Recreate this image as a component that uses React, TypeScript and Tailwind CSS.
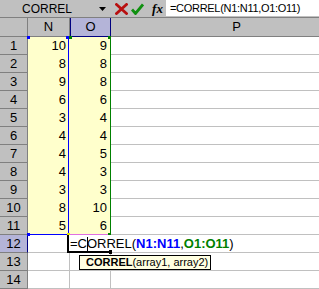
import React from "react";

const nVals = [10, 8, 9, 6, 3, 4, 4, 4, 3, 8, 5];
const oVals = [9, 8, 8, 6, 4, 4, 5, 3, 3, 10, 6];
const rows = Array.from({ length: 14 }, (_, i) => i + 1);

const App = () => {
  return (
    <div className="relative w-[319px] h-[289px] overflow-hidden bg-white text-black font-['Liberation_Sans',Arial,sans-serif]">
      {/* formula bar */}
      <div className="flex h-[18px] bg-[#c0c0c0] border-b border-[#808080]">
        <div className="w-[94px] shrink-0 flex items-center justify-center text-[12px] leading-none pt-px">CORREL</div>
        <div className="w-[16px] shrink-0 flex items-center justify-center pt-px">
          <svg width="7" height="4" viewBox="0 0 7 4">
            <path d="M0 0h7L3.5 4z" fill="#000" />
          </svg>
        </div>
        <div className="ml-[5px] w-[13px] shrink-0 flex items-center justify-center">
          <svg width="13" height="12" viewBox="0 0 13 12">
            <path d="M1.5 1.5l10 9M11.5 1.5l-10 9" stroke="#b81010" strokeWidth="2.8" strokeLinecap="square" />
          </svg>
        </div>
        <div className="ml-[3px] w-[13px] shrink-0 flex items-center justify-center">
          <svg width="13" height="12" viewBox="0 0 13 12">
            <path d="M1 6.5l3.5 4L12 1.5" stroke="#109010" strokeWidth="2.8" fill="none" />
          </svg>
        </div>
        <div className="ml-[8px] w-[11px] shrink-0 flex items-center justify-center font-['Liberation_Serif',serif] italic font-bold text-[13px] leading-none">
          fx
        </div>
        <div className="ml-[3px] flex-1 h-[16px] bg-white flex items-center pl-[4px] text-[11px] tracking-[-0.3px] whitespace-nowrap">
          =CORREL(N1:N11,O1:O11)
        </div>
      </div>

      {/* column headers */}
      <div className="flex h-[19px] text-[13px]">
        <div className="w-[28px] shrink-0 bg-[#c0c0c0] border-r border-b border-[#808080]" />
        <div className="w-[42px] shrink-0 bg-[#c0c0c0] border-r border-b border-[#808080] flex items-center justify-center">N</div>
        <div className="w-[41px] shrink-0 bg-[#b4b4d8] border-x border-b border-[#000080] flex items-center justify-center">O</div>
        <div className="w-[252px] shrink-0 bg-[#c0c0c0] border-r border-b border-[#808080] flex items-center justify-center">P</div>
      </div>

      {/* rows */}
      {rows.map((r) => {
        const filled = r <= 11;
        return (
          <div key={r} className="flex h-[18px] text-[13px]">
            <div
              className={
                r === 12
                  ? "w-[28px] shrink-0 bg-[#b4b4d8] border-r border-b border-r-[#000080] border-b-[#808080] flex items-center justify-center"
                  : "w-[28px] shrink-0 bg-[#c0c0c0] border-r border-b border-[#808080] flex items-center justify-center"
              }
            >
              {r}
            </div>
            <div
              className={
                filled
                  ? "w-[42px] shrink-0 bg-[#ffffcc] flex items-center justify-end pr-[4px]"
                  : "w-[42px] shrink-0 border-r border-b border-[#c0c0c0]"
              }
            >
              {filled ? nVals[r - 1] : null}
            </div>
            <div
              className={
                filled
                  ? "w-[41px] shrink-0 bg-[#ffffcc] flex items-center justify-end pr-[4px]"
                  : "w-[41px] shrink-0 border-r border-b border-[#c0c0c0]"
              }
            >
              {filled ? oVals[r - 1] : null}
            </div>
            <div className="w-[252px] shrink-0 border-r border-b border-[#c0c0c0]" />
          </div>
        );
      })}

      {/* range finder borders */}
      <div className="absolute left-[68px] top-[37px] w-px h-[198px] bg-[#0000ff]" />
      <div className="absolute left-[27px] top-[234px] w-[42px] h-px bg-[#0000ff]" />
      <div className="absolute left-[110px] top-[37px] w-px h-[198px] bg-[#008000]" />
      <div className="absolute left-[69px] top-[234px] w-[42px] h-px bg-[#e070e0]" />
      <div className="absolute left-[27px] top-[36px] w-[3px] h-[3px] bg-[#0000ff]" />
      <div className="absolute left-[66px] top-[36px] w-[3px] h-[3px] bg-[#0000ff]" />
      <div className="absolute left-[27px] top-[233px] w-[3px] h-[3px] bg-[#0000ff]" />
      <div className="absolute left-[69px] top-[36px] w-[3px] h-[3px] bg-[#008000]" />
      <div className="absolute left-[108px] top-[36px] w-[3px] h-[3px] bg-[#008000]" />
      <div className="absolute left-[67px] top-[233px] w-[3px] h-[3px] bg-[#e0e000]" />
      <div className="absolute left-[108px] top-[233px] w-[3px] h-[3px] bg-[#008000]" />

      {/* in-cell editor */}
      <div className="absolute left-[67px] top-[235px] w-[172px] h-[17px] bg-white border-l-2 border-black flex items-center pl-px text-[13px] whitespace-nowrap">
        <span>=C</span>
        <span className="inline-block w-px h-[14px] bg-black -mr-px" />
        <span>ORREL(</span>
        <span className="text-[#0000ff] font-bold">N1:N11</span>
        <span>,</span>
        <span className="text-[#008000] font-bold">O1:O11</span>
        <span>)</span>
      </div>
      <div className="absolute left-[67px] top-[251px] w-[42px] h-[2px] bg-black" />
      <div className="absolute left-[109px] top-[250px] w-[3px] h-[4px] bg-black" />

      {/* function tooltip */}
      <div className="absolute left-[79px] top-[255px] w-[132px] h-[15px] bg-[#ffffe1] border border-black flex items-center pl-[6px] text-[11px] whitespace-nowrap">
        <span className="font-bold">CORREL</span>
        <span>(array1, array2)</span>
      </div>
    </div>
  );
};

export default App;
